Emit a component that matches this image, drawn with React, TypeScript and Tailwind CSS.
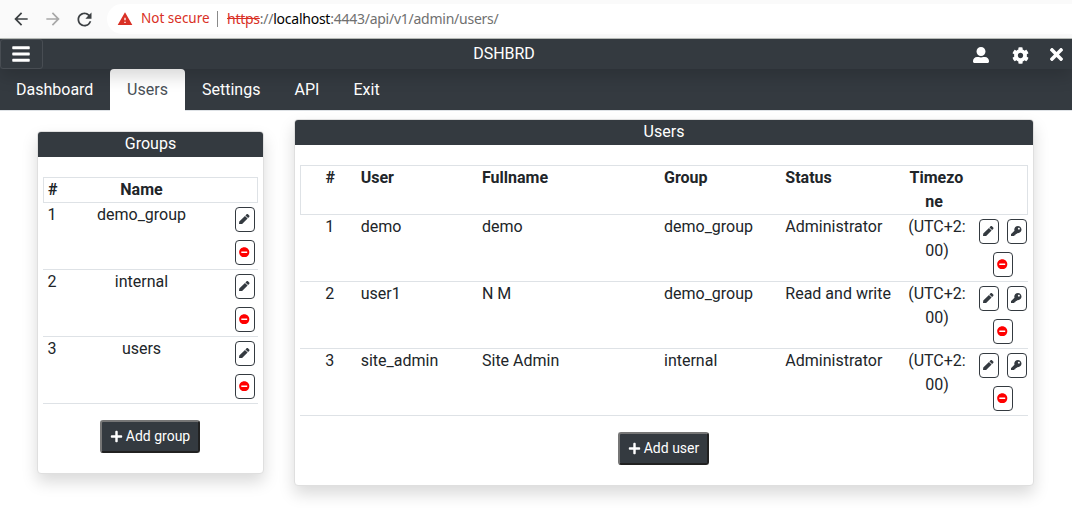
import React from "react";
import { FaBars, FaCog, FaKey, FaMinusCircle, FaPen, FaPlus, FaTimes, FaUserAlt } from "react-icons/fa";
import { MdArrowBack, MdArrowForward, MdRefresh, MdWarning } from "react-icons/md";

const groups = ["demo_group", "internal", "users"];

const users = [
  { user: "demo", fullname: "demo", group: "demo_group", status: "Administrator" },
  { user: "user1", fullname: "N M", group: "demo_group", status: "Read and write" },
  { user: "site_admin", fullname: "Site Admin", group: "internal", status: "Administrator" },
];

const userColumns = "grid grid-cols-[60.67px_121.33px_182px_121.33px_121.33px_60.67px_60.67px]";

function IconButton({ children, label }: { children: React.ReactNode; label: string }) {
  return (
    <button aria-label={label} className="flex h-[25px] w-5 items-center justify-center rounded-[4px] border border-[#343a40] pr-px pb-px text-[10.5px] text-[#343a40]">
      {children}
    </button>
  );
}

function AddButton({ children, className }: { children: React.ReactNode; className: string }) {
  return (
    <button
      className={
        "mt-4 flex h-[33px] items-center justify-center gap-[3px] rounded-[3px] border-2 border-t-[#767676] border-l-[#767676] border-r-[#212121] border-b-[#212121] bg-[#343a40] pb-px text-sm text-white " +
        className
      }
    >
      <FaPlus className="size-[13px]" />
      <span>{children}</span>
    </button>
  );
}

function Card({ title, className, children }: { title: string; className: string; children: React.ReactNode }) {
  return (
    <section className={"flex flex-col rounded-[4px] border border-[#dfdfdf] bg-white shadow-[0_8px_16px_rgba(0,0,0,0.15)] " + className}>
      <h2 className="h-[25px] rounded-t-[3px] bg-[#343a40] text-center leading-6 text-white">{title}</h2>
      <div className="px-[5px] pt-5">{children}</div>
    </section>
  );
}

function BrowserBar() {
  return (
    <div className="flex h-[39px] items-center border-b border-[#b9bdb9] bg-[#fafafa] font-['Noto_Sans',sans-serif] text-sm">
      <MdArrowBack className="ml-[11px] size-5 text-[#3c4043]" />
      <MdArrowForward className="ml-3 size-5 text-[#a8a8a8]" />
      <MdRefresh className="ml-[11px] size-[21px] text-[#3c4043]" />
      <div className="ml-3 flex h-[30px] flex-1 items-center rounded-l-full bg-white pl-[10px]">
        <MdWarning className="size-4 text-[#d93025]" />
        <span className="ml-2 w-[69px] text-[13.5px] whitespace-nowrap text-[#d93025]">Not secure</span>
        <span className="ml-[7px] h-4 w-px bg-[#8a8a8a]" />
        <span className="ml-[9px] whitespace-nowrap tracking-[-0.25px] text-[#707070]">
          <span className="text-[#d93025] line-through">https</span>://<span className="text-black">localhost</span>:4443/api/v1/admin/users/
        </span>
      </div>
    </div>
  );
}

export default function App() {
  return (
    <div className="h-[508px] w-[1072px] overflow-hidden bg-white font-[Roboto,sans-serif] text-base leading-6 text-[#212529]">
      <BrowserBar />

      <header className="relative flex h-[30px] items-center bg-[#343a40] text-white shadow-[0_8px_16px_rgba(0,0,0,0.15)]">
        <button aria-label="Menu" className="flex h-[30px] w-[43px] items-center justify-center rounded-[3px] border border-[#484d53] pr-0.5 pb-px">
          <FaBars className="size-5" />
        </button>
        <h1 className="flex-1 pr-2 text-center">DSHBRD</h1>
        <div className="flex w-[99px] items-center">
          <FaUserAlt className="mt-0.5 size-4" />
          <FaCog className="mt-0.5 ml-[23px] size-[17px]" />
          <FaTimes className="ml-[18px] size-[19px]" />
        </div>
      </header>

      <nav className="flex h-[42px] border-b border-[#dee2e6] bg-[#343a40] leading-[41px] text-white">
        <a className="w-[110px] pl-4">Dashboard</a>
        <a className="-mb-px w-[75px] rounded-t-[4px] bg-white text-center text-[#495057]">Users</a>
        <a className="w-[92px] pl-[17px]">Settings</a>
        <a className="w-[59px] pl-[17.5px]">API</a>
        <a className="pl-[17.5px]">Exit</a>
      </nav>

      <main className="flex items-start">
        <Card title="Groups" className="mt-5 ml-[37px] h-[343px] w-[227px]">
          <div className="grid h-[26px] grid-cols-[54px_1fr_54px] border border-[#dee2e6] font-bold">
            <span className="pl-1">#</span>
            <span className="-translate-x-[9px] text-center">Name</span>
          </div>
          {groups.map((name, i) => (
            <div key={name} className="grid h-[67px] grid-cols-[54px_1fr_54px] border-b border-[#dee2e6]">
              <span className="pl-[4.5px]">{i + 1}</span>
              <span className="-translate-x-[9px] text-center">{name}</span>
              <div className="flex flex-col items-end gap-2 pt-1 pr-[3px]">
                <IconButton label="Edit"><FaPen /></IconButton>
                <IconButton label="Delete"><FaMinusCircle className="text-[#ff0000]" /></IconButton>
              </div>
            </div>
          ))}
          <AddButton className="ml-[57px] w-[100px]">Add group</AddButton>
        </Card>

        <Card title="Users" className="mt-2 ml-[30px] h-[367px] w-[740px]">
          <div className="h-[50px] border border-[#dee2e6] font-bold">
            <div className={userColumns + " -mx-px"}>
              <span className="text-center">#</span>
              <span>User</span>
              <span>Fullname</span>
              <span>Group</span>
              <span>Status</span>
              <span className="pr-px text-center">Timezo<br /><span className="pr-[5px]">ne</span></span>
            </div>
          </div>
          {users.map((u, i) => (
            <div key={u.user} className={userColumns + " h-[67px] border-b border-[#dee2e6]"}>
              <span className="pr-px text-center">{i + 1}</span>
              <span>{u.user}</span>
              <span>{u.fullname}</span>
              <span>{u.group}</span>
              <span>{u.status}</span>
              <span className="text-center">(UTC+2:<br />00)</span>
              <div className="flex flex-col items-end gap-2 pt-1 pr-px">
                <div className="flex gap-2">
                  <IconButton label="Edit"><FaPen /></IconButton>
                  <IconButton label="Change password"><FaKey /></IconButton>
                </div>
                <div className="pr-[14px]">
                  <IconButton label="Delete"><FaMinusCircle className="text-[#ff0000]" /></IconButton>
                </div>
              </div>
            </div>
          ))}
          <AddButton className="ml-[318px] w-[91px]">Add user</AddButton>
        </Card>
      </main>
    </div>
  );
}
